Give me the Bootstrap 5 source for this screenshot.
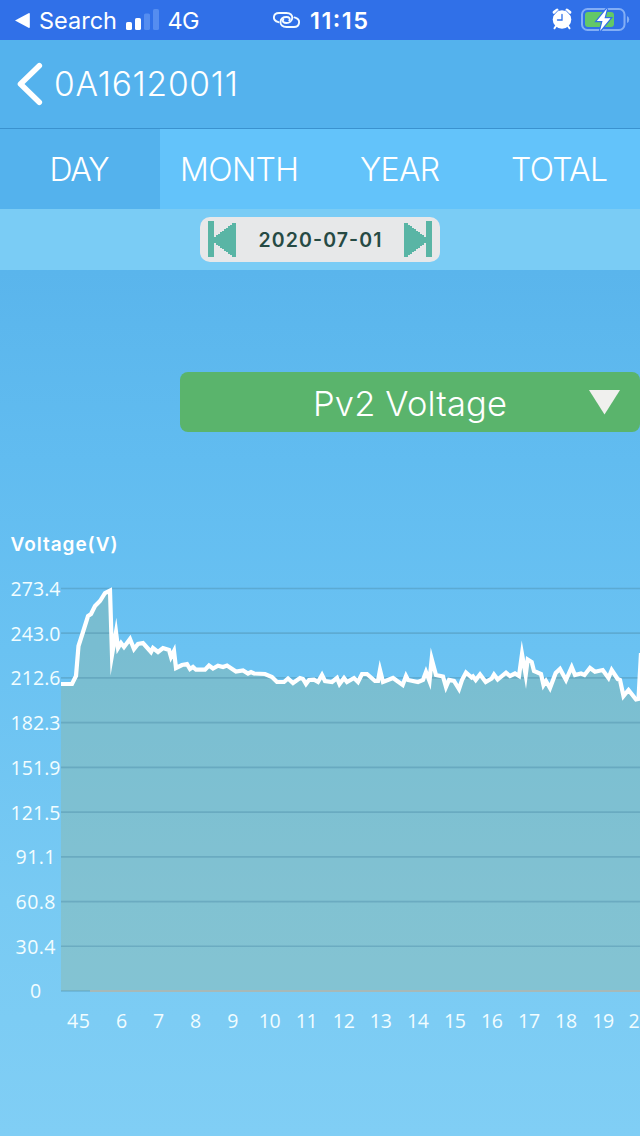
<!DOCTYPE html>
<html lang="en">
<head>
<meta charset="utf-8">
<meta name="viewport" content="width=device-width, initial-scale=1">
<title>0A16120011</title>
<link href="https://cdn.jsdelivr.net/npm/bootstrap@5.3.0/dist/css/bootstrap.min.css" rel="stylesheet">
<style>
  body { font-family: Inter, "Liberation Sans", sans-serif; width: 640px; height: 1136px; overflow: hidden; color: #fff;
    background: linear-gradient(#5ab5ec 270px, #61bcf0 460px, #6ac2f2 650px, #78caf3 900px, #80cef5 1136px); }
  svg { display: block; flex: none; }
  .status { height: 40px; background: #3070e8; }
  .status svg text, .lbl { fill: #fff; }
  .titlebar { height: 89px; background: #54b2ed; border-bottom: 1px solid #3a92cf; }
  .tabs { height: 80px; background: #63c3fa; }
  .tabs .nav-link { color: #fff; border-radius: 0; font-weight: 350; padding: 0; }
  .tabs .nav-link.active { background: #54b2ed; }
  .datebar { height: 61px; background: #7accf5; }
  .datepick { width: 240px; height: 45px; border-radius: 10px; background: #e7e8e9; margin-top: -1px; }
  .picker { width: 460px; height: 60px; margin-top: 102px; border-radius: 8px; background: #5ab46c; }
  .picker:hover { background: #5ab46c; }
  .chart { margin-top: 88px; }
  .axis text { font-family: "Open Sans", "Noto Sans", sans-serif; font-size: 19.5px; font-weight: 500; fill: #f2fdff; }
</style>
</head>
<body>
<header>
  <div class="status">
    <svg width="640" height="40" viewBox="0 0 640 40">
      <path d="M15 20.5 28.5 13.2q1.3-.6 1.3.8v13q0 1.4-1.3.8z" fill="#fff"/>
      <text x="39" y="29" font-size="23.5" textLength="78">Search</text>
      <rect x="126" y="22" width="6" height="8" rx="1.6" fill="#fff"/>
      <rect x="135" y="18" width="6" height="12" rx="1.6" fill="#fff"/>
      <rect x="144" y="13.500" width="6" height="16.500" rx="1.6" fill="#558df0"/>
      <rect x="153" y="9" width="6" height="21" rx="1.600" fill="#558df0"/>
      <text x="167.500" y="29" font-size="23.5" textLength="32">4G</text>
      <g fill="none" stroke="#f3fbff" stroke-width="1.9" stroke-linecap="round">
        <path d="M278.500 22.200C275 21.200 273.700 19 273.900 17C274.200 14.400 276.200 13 279 13H286.500C290.500 13 292.500 15.200 292.300 18C292 21 289.500 23 286.500 23C283.700 23 281.800 21.600 283.300 19.300"/>
        <path d="M294.500 17.400C298 18.400 299.300 20.600 299.100 22.600C298.800 25.500 296.800 27 294 27H286.500C282.500 27 280.200 24.800 280.500 21.800C280.800 18.800 283.400 17 286.500 17C289.300 17 290.700 18.600 289.300 20.600"/>
      </g>
      <text x="310" y="29" font-size="23.5" font-weight="600" textLength="58">11:15</text>
      <g stroke="#fff" fill="none" stroke-linecap="round">
        <circle cx="562" cy="19.500" r="9.300" fill="#fff" stroke="none"/>
        <path d="M554.200 12.300 557 10.300M569.800 12.300 567 10.300" stroke-width="3.200"/>
        <path d="M556 26 554.500 28.300M568 26 569.500 28.300" stroke-width="2"/>
        <path d="M553.500 15.200 558 10.500M570.500 15.200 566 10.500" stroke="#3070e8" stroke-width=".8"/>
        <path d="M562 14.500V20H557.500" stroke="#3070e8" stroke-width="1.300"/>
      </g>
      <rect x="582" y="9" width="42.500" height="21" rx="5.500" fill="none" stroke="#83aef5" stroke-width="2"/>
      <path d="M627 16q2.200.6 2.200 3.500t-2.200 3.500z" fill="#83aef5"/>
      <rect x="585" y="12" width="29" height="15" rx="3" fill="#63c867"/>
      <path d="M607 8.500 596.800 21H602.500L600 31 610.500 18.200H604.500z" fill="#fff" stroke="#3070e8" stroke-width="2.400" paint-order="stroke"/>
    </svg>
  </div>
  <div class="titlebar">
    <svg width="640" height="88" viewBox="0 0 640 88">
      <path d="M39.300 25.800 20.500 44 39.300 62.200" fill="none" stroke="#fff" stroke-width="5.600" stroke-linecap="round" stroke-linejoin="round"/>
      <text class="lbl" x="54" y="56" font-size="33.5" font-weight="350" textLength="184">0A16120011</text>
    </svg>
  </div>
  <nav class="tabs nav nav-pills nav-fill row g-0">
    <a class="nav-link active col-3" href="#"><svg width="160" height="80"><text class="lbl" x="49.500" y="52" font-size="32" textLength="60">DAY</text></svg></a>
    <a class="nav-link col-3" href="#"><svg width="160" height="80"><text class="lbl" x="20" y="52" font-size="32" textLength="119">MONTH</text></svg></a>
    <a class="nav-link col-3" href="#"><svg width="160" height="80"><text class="lbl" x="40" y="52" font-size="32" textLength="80">YEAR</text></svg></a>
    <a class="nav-link col-3" href="#"><svg width="160" height="80"><text class="lbl" x="31" y="52" font-size="32" textLength="97">TOTAL</text></svg></a>
  </nav>
  <div class="datebar d-flex justify-content-center align-items-center">
    <div class="datepick">
      <svg width="240" height="45" viewBox="0 0 240 45">
        <g fill="#59b5a5" shape-rendering="crispEdges">
          <path d="M8 4h6v36H8z"/>
          <path id="prev" d="M36 6V40H32V38H30V37H28V35H26V34H24V32H22V31H20V29H18V28H16V26H14V20H16V18H18V17H20V15H22V14H24V12H26V11H28V9H30V8H32V6z"/>
          <use href="#prev" transform="matrix(-1 0 0 1 240 0)"/>
          <path d="M226 4h6v36h-6z"/>
        </g>
        <text x="58.500" y="30" font-size="19.5" font-weight="600" fill="#264a44" textLength="123">2020-07-01</text>
      </svg>
    </div>
  </div>
</header>
<main>
  <div class="d-flex justify-content-end">
    <button class="btn picker border-0 p-0" type="button">
      <svg width="460" height="60" viewBox="0 0 460 60">
        <text class="lbl" x="133" y="43.500" font-size="34.5" font-weight="350" textLength="194">Pv2 Voltage</text>
        <path d="M409 18H440L424.500 42.500z" fill="#f0f0ee"/>
      </svg>
    </button>
  </div>
  <svg class="chart" width="640" height="616" viewBox="0 520 640 616">
    <text class="lbl" x="10.500" y="551" font-size="19" font-weight="600" textLength="107">Voltage(V)</text>
    <path id="area" fill="#8fb8a4" fill-opacity=".42"/>
    <g id="grid" stroke="#4c8daa" stroke-opacity=".42" stroke-width="1.700"></g>
    <path d="M90 991H640" stroke="#a7b9b7" stroke-width="2"/>
    <path id="line" fill="none" stroke="#fff" stroke-width="4.200" stroke-miterlimit="10"/>
    <g class="axis" id="labels"></g>
  </svg>
</main>
<script src="https://cdn.jsdelivr.net/npm/bootstrap@5.3.0/dist/js/bootstrap.bundle.min.js"></script>
<script>
  const pts = "61,684 72,684 76,676 78.500,646 83,632 88,616 91,614 95,606 100,601 105,593 110,590.500 112,655 116,632 118,648 121,643 124,647 130,639 134,649 138,644 143,643 151,652 153,648 158,652 163,648 169,650 171,657 174,651 176,668 182,665 187,664 190,669 193,667 196,669.700 205,669.700 209,665.500 213,668.500 218,665.700 223,667 227,665.500 236,671.500 243,670.500 248,673.500 251,672 254,673.500 265,674 272,677 277,682 284,682 288,678.500 293,683 300,678 303,679 306,684 309,680 314,679.700 318,682 322,675 325,681 332,682 337,678 339.500,684 344,678 347,682 354,678 358,682 362,674 367,674 375,681 378,681 380,670 383,682 393,678 402.700,685 406,676 408,680 418,682 423,680 426,672 429.500,681 431.700,659 436,675 443,676.500 446,687 449,680 454,681 459,689 462,680 466,672.500 471.700,677.500 473,676.500 475.700,680 480,674.500 485.700,682 491.700,678.500 494,674.500 497.700,679.500 506,672.700 510,676 515,673.500 519,676 522,654 525.700,675 527.700,659.500 531.700,662 534,671 541,674 543.500,685 546,681 550,688 555.700,673 560,669 566,680 571.700,667 575,675 581,673.500 584.500,675 590,668 595,671.700 602.700,670 608.500,678 611.700,670 617.700,679 620,680 623.500,696 628.500,690 636,699.500 638.500,699 641,653".split(" ");
  document.getElementById("line").setAttribute("d", "M" + pts.join("L"));
  document.getElementById("area").setAttribute("d", "M61,991L" + pts.join("L") + "L641,991Z");

  const ns = "http://www.w3.org/2000/svg";
  function add(parent, name, attrs, text) {
    const el = document.createElementNS(ns, name);
    for (const k in attrs) el.setAttribute(k, attrs[k]);
    if (text) el.textContent = text;
    document.getElementById(parent).appendChild(el);
  }
  const yLabels = ["273.4", "243.0", "212.6", "182.3", "151.9", "121.5", "91.1", "60.8", "30.4", "0"];
  yLabels.forEach((t, i) => {
    const y = 588.5 + i * 44.72;
    add("grid", "path", { d: `M61 ${y}H640` });
    const w = { 5: 50, 4: 40, 1: 11 }[t.length];
    add("labels", "text", { x: 35.5 - w / 2, y: y + 7.5, textLength: w }, t);
  });
  add("labels", "text", { x: 67, y: 1028, textLength: 23 }, "45");
  for (let h = 6; h <= 19; h++) {
    const w = h < 10 ? 11 : 22, cx = 121.5 + (h - 6) * 37.05;
    add("labels", "text", { x: cx - w / 2, y: 1028, textLength: w }, String(h));
  }
  add("labels", "text", { x: 628.5, y: 1028 }, "2");
</script>
</body>
</html>
